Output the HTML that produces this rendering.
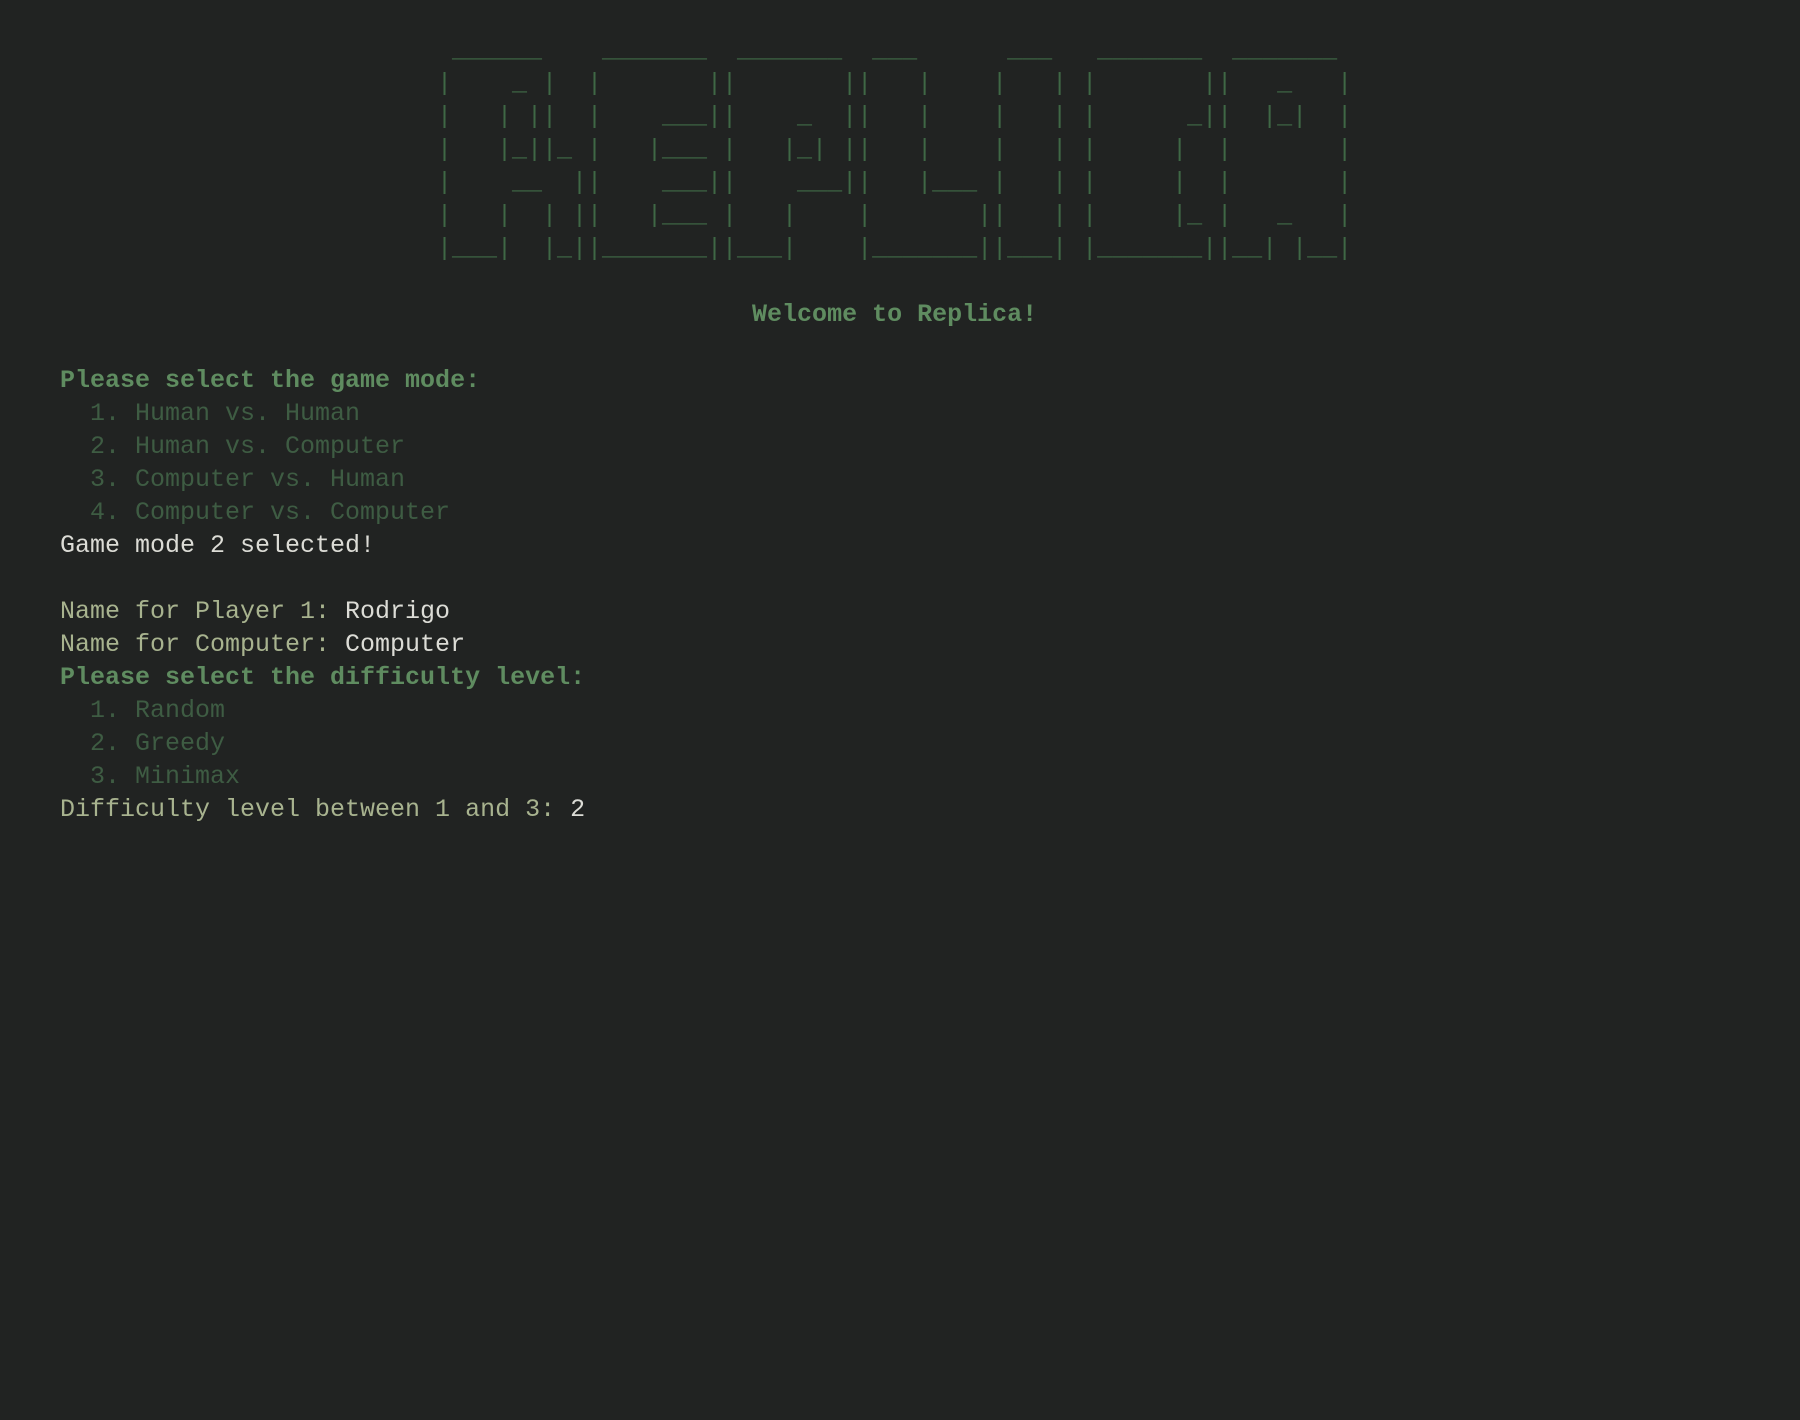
<!DOCTYPE html>
<html><head><meta charset="utf-8"><style>
html,body{margin:0;padding:0;background:#212322;width:1800px;height:1420px;overflow:hidden}
pre{margin:0;position:absolute;left:0;top:34px;font-family:"Liberation Mono",monospace;font-size:25px;line-height:33px;color:#dcdcd6;white-space:pre}
.a{color:#3f6845}
.h{color:#5f8c60;font-weight:bold}
.o{color:#3e5c43}
.p{color:#a8b38f}
.w{color:#dcdcd6}
.art{position:absolute;left:437px;top:34px}
.txt{left:60px;top:34px}
</style></head><body>
<pre class="art"><span class="a"> ______    _______  _______  ___      ___   _______  _______ 
|    _ |  |       ||       ||   |    |   | |       ||   _   |
|   | ||  |    ___||    _  ||   |    |   | |      _||  |_|  |
|   |_||_ |   |___ |   |_| ||   |    |   | |     |  |       |
|    __  ||    ___||    ___||   |___ |   | |     |  |       |
|   |  | ||   |___ |   |    |       ||   | |     |_ |   _   |
|___|  |_||_______||___|    |_______||___| |_______||__| |__|</span>

<span class="h">                     Welcome to Replica!</span></pre>
<pre class="txt">










<span class="h">Please select the game mode:</span>
<span class="o">  1. Human vs. Human</span>
<span class="o">  2. Human vs. Computer</span>
<span class="o">  3. Computer vs. Human</span>
<span class="o">  4. Computer vs. Computer</span>
<span class="w">Game mode 2 selected!</span>

<span class="p">Name for Player 1: </span><span class="w">Rodrigo</span>
<span class="p">Name for Computer: </span><span class="w">Computer</span>
<span class="h">Please select the difficulty level:</span>
<span class="o">  1. Random</span>
<span class="o">  2. Greedy</span>
<span class="o">  3. Minimax</span>
<span class="p">Difficulty level between 1 and 3: </span><span class="w">2</span></pre>
</body></html>
